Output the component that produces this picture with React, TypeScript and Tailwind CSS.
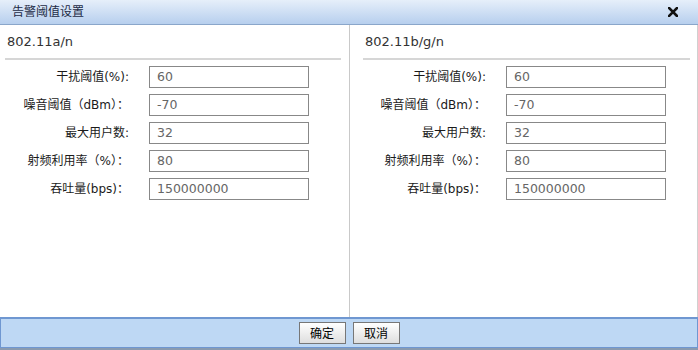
import React from "react";

const rows = [
  { label: "干扰阈值(%):", value: "60" },
  { label: "噪音阈值（dBm）：", value: "-70" },
  { label: "最大用户数:", value: "32" },
  { label: "射频利用率（%）：", value: "80" },
  { label: "吞吐量(bps)：", value: "150000000" },
];

const font = {
  fontFamily: '"DejaVu Sans", Verdana, "Noto Sans CJK SC", sans-serif',
};

function Column({
  title,
  headPad,
  rowPad,
  border,
}: {
  title: string;
  headPad: string;
  rowPad: string;
  border?: boolean;
}) {
  return (
    <div className={`flex flex-col ${border ? "border-r border-[#c9c9c9]" : ""}`}>
      <div className={`${headPad} mr-[8px]`}>
        <div className="h-[33px] flex items-center pl-[2px] text-[13px] text-[#333]">
          {title}
        </div>
        <div className="h-[2px] bg-[#d6d6d6]" />
      </div>
      <div className={`flex flex-col gap-[6px] pt-[6px] ${rowPad}`}>
        {rows.map((r) => (
          <div key={r.label} className="flex items-center">
            <div className="w-[129px] text-right text-[12px] text-[#1a1a1a] whitespace-nowrap">
              {r.label}
            </div>
            <div className="ml-[20px] w-[160px] h-[22px] border border-[#888] flex items-center pl-[7px] text-[12.5px] text-[#666]">
              {r.value}
            </div>
          </div>
        ))}
      </div>
    </div>
  );
}

export default function App() {
  return (
    <div className="w-[698px] h-[350px] flex flex-col bg-white overflow-hidden" style={font}>
      <div className="h-[25px] flex items-center justify-between pl-[12px] pr-[20px] bg-gradient-to-b from-[#e6effa] to-[#b7cfee] border-b border-[#8aa6ca]">
        <span className="text-[12px] text-[#1d2b45]">告警阈值设置</span>
        <svg width="10" height="10" viewBox="0 0 10 10">
          <path d="M1 1 L9 9 M9 1 L1 9" stroke="#111" strokeWidth="2.6" strokeLinecap="square" />
        </svg>
      </div>
      <div className="flex-1 grid grid-cols-[350px_348px] border-r border-[#d0d0d0]">
        <Column title="802.11a/n" headPad="ml-[5px]" rowPad="pl-0" border />
        <Column title="802.11b/g/n" headPad="ml-[13px]" rowPad="pl-[7px]" />
      </div>
      <div className="h-[31px] bg-[#bed8f4] border border-[#6f97d1] border-t-2 flex items-center justify-center gap-[7px]">
        {["确定", "取消"].map((t) => (
          <button
            key={t}
            className="w-[47px] h-[22px] border border-[#777] bg-gradient-to-b from-white to-[#dedede] text-[12px] text-black"
            style={{ fontFamily: '"Noto Sans CJK SC", sans-serif' }}
          >
            {t}
          </button>
        ))}
      </div>
      <div className="h-[2px] bg-[#8a9bb0]" />
    </div>
  );
}
